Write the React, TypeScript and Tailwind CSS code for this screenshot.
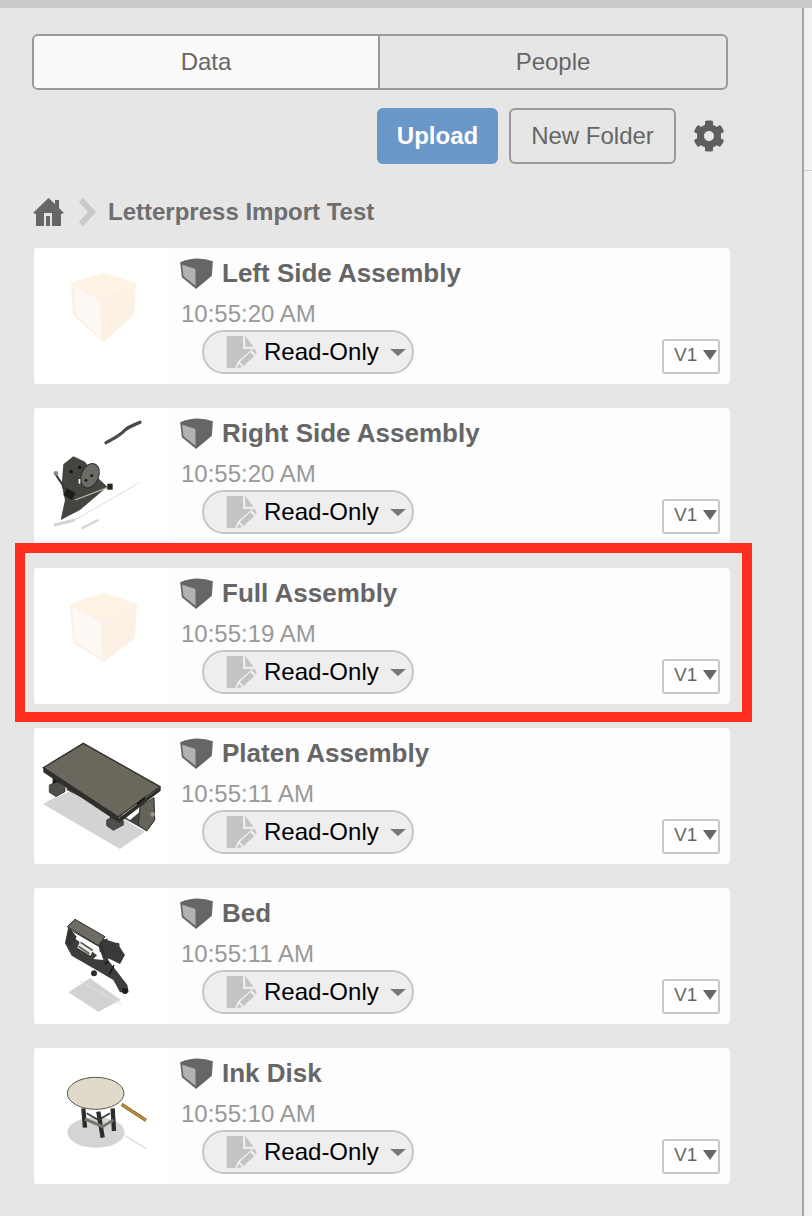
import { FaCog } from 'react-icons/fa'

const sans = "font-['Liberation_Sans',Arial,sans-serif]"

function AssemblyIcon() {
  return (
    <svg width="33" height="31" viewBox="0 0 98 93" className="shrink-0">
      <path d="M0 13 Q48 -8 98 10 L95 53 L48 93 L5 58 Z" fill="#666666" />
      <path d="M6 20 L46 33 L46 83 L10 55 Z" fill="#b2b2b2" />
    </svg>
  )
}

function ReadOnlyIcon() {
  return (
    <svg width="32" height="34" viewBox="76 20 98 102" className="shrink-0">
      <path d="M78 22 H128 V62 H156 L112 100 L104 120 H78 Z" fill="#c4c4c4" />
      <path d="M135 22 L160 55 H135 Z" fill="#c4c4c4" />
      <path d="M150 72 L162 84 L130 114 L118 102 Z" fill="#c4c4c4" />
      <path d="M155 66 L161 61 L171 71 L166 79 Z" fill="#c4c4c4" />
      <path d="M115 107 L125 117 L110 121 Z" fill="#c4c4c4" />
    </svg>
  )
}

function Caret({ className }: { className: string }) {
  return <span className={`h-0 w-0 border-x-transparent border-solid ${className}`} />
}

function EmptyCube({ tall }: { tall?: boolean }) {
  const outer = tall
    ? '70,25 103,36 101,70 70,94 39,75 36,36'
    : '69,25 102,35 100,67 69,94 39,67 37,35'
  const top = tall ? '70,25 103,36 68,52 36,36' : '69,25 102,35 68,50 37,35'
  const front = tall ? '39,39 67,54 68,90 41,73' : '40,38 66,52 67,90 42,66'
  return (
    <svg width="136" height="136" viewBox="0 0 136 136">
      <polygon points={outer} fill="#fdf0e5" />
      <polygon points={top} fill="#fff3e3" />
      <polygon points={front} fill="#fff9f5" />
    </svg>
  )
}

function RightSideThumb() {
  return (
    <svg width="136" height="136" viewBox="12 9 408 408" className="blur-[0.5px]">
      <path d="M135 345 L330 232" stroke="#dddddd" strokeWidth="3" />
      <path d="M72 360 L135 345" stroke="#d5d5d5" strokeWidth="9" />
      <path d="M155 370 L205 345" stroke="#d5d5d5" strokeWidth="7" />
      <path d="M228 113 C255 98 270 92 285 75 C300 62 315 60 330 52" stroke="#4a4a48" strokeWidth="10" fill="none" strokeLinecap="round" />
      <polygon points="92,345 105,285 95,240 100,178 130,154 165,170 200,215 232,245 150,315" fill="#45453f" />
      <ellipse cx="180" cy="212" rx="26" ry="38" transform="rotate(22 180 212)" fill="#6d6c64" stroke="#2c2c2a" strokeWidth="3" />
      <circle cx="123" cy="200" r="5" fill="#111111" />
      <circle cx="149" cy="187" r="5" fill="#111111" />
      <circle cx="185" cy="212" r="4" fill="#111111" />
      <circle cx="168" cy="226" r="4" fill="#111111" />
      <path d="M75 205 L125 280" stroke="#3a3a36" strokeWidth="6" />
      <circle cx="78" cy="205" r="7" fill="#8a8a80" />
      <rect x="104" y="255" width="30" height="24" fill="#1d1d1c" transform="rotate(30 118 266)" />
      <path d="M135 285 L240 245" stroke="#b8b8ac" strokeWidth="4" />
      <rect x="232" y="236" width="16" height="18" fill="#26261f" />
      <rect x="146" y="222" width="5" height="14" fill="#ffffff" />
    </svg>
  )
}

function PlatenThumb() {
  return (
    <svg width="136" height="136" viewBox="12 9 408 408" className="blur-[0.5px]">
      <polygon points="60,225 40,238 270,372 345,320 130,195" fill="#d3d3d3" />
      <rect x="68" y="145" width="22" height="38" fill="#161616" />
      <polygon points="58,180 82,170 105,185 105,200 78,215 58,202" fill="#4f4e48" stroke="#232321" strokeWidth="2" />
      <rect x="240" y="255" width="22" height="34" fill="#161616" />
      <polygon points="230,285 255,272 280,288 280,300 250,316 230,302" fill="#4f4e48" stroke="#232321" strokeWidth="2" />
      <polygon points="110,180 300,285 372,225 372,290 350,318 285,282 110,195" fill="#45443e" />
      <polygon points="330,245 372,218 374,285 350,318 325,300" fill="#65635a" stroke="#2d2d2a" strokeWidth="3" />
      <circle cx="368" cy="268" r="7" fill="#9a988d" />
      <polygon points="40,128 268,278 392,185 392,197 268,294 40,142" fill="#302f2c" />
      <polygon points="160,55 390,185 265,276 40,128" fill="#6b675c" stroke="#2e2e2c" strokeWidth="4" />
      <path d="M320 238 L345 218" stroke="#0f0f0f" strokeWidth="5" />
    </svg>
  )
}

function BedThumb() {
  return (
    <svg width="136" height="136" viewBox="12 9 408 408" className="blur-[0.5px]">
      <polygon points="115,322 180,280 272,345 205,380" fill="#d2d2d2" />
      <path d="M150 288 L275 358" stroke="#e2e2e2" strokeWidth="3" />
      <polygon points="105,175 132,158 200,210 232,222 292,300 296,322 270,322 250,285 190,250 125,212" fill="#3d3d3b" />
      <polygon points="115,125 140,155 125,182 105,175" fill="#343432" />
      <polygon points="205,175 232,160 235,225 212,215" fill="#343432" />
      <polygon points="215,160 262,175 285,210 270,237 225,215" fill="#3a3a38" />
      <polygon points="112,125 135,103 225,155 205,182" fill="#6e6c63" stroke="#2b2b29" strokeWidth="3" />
      <path d="M120 134 L210 186" stroke="#2a2a28" strokeWidth="3" />
      <circle cx="262" cy="180" r="7" fill="#3d3d3b" />
      <circle cx="285" cy="318" r="9" fill="#1d1d1c" />
      <circle cx="192" cy="265" r="9" fill="#2c2c2a" />
      <polygon points="150,168 190,192 182,212 142,188" fill="#e9e9e6" />
      <path d="M152 172 L188 196 M146 184 L178 206" stroke="#555550" strokeWidth="5" />
      <polygon points="190,222 212,200 220,225" fill="#ffffff" />
      <path d="M225 238 L235 228 M238 268 L252 240" stroke="#111111" strokeWidth="4" />
    </svg>
  )
}

function InkDiskThumb() {
  return (
    <svg width="136" height="136" viewBox="12 9 408 408" className="blur-[0.5px]">
      <ellipse cx="198" cy="262" rx="86" ry="46" fill="#d4d4d4" />
      <path d="M285 272 L348 310" stroke="#dddddd" strokeWidth="4" />
      <path d="M275 178 L348 226" stroke="#7a5a1e" strokeWidth="10" />
      <path d="M275 178 L348 226" stroke="#cf9a3a" strokeWidth="5" />
      <path d="M160 190 L165 248 M248 190 L252 258 M205 200 L218 278" stroke="#2d2d2b" strokeWidth="13" />
      <path d="M165 222 L218 245 L250 225" stroke="#77776f" strokeWidth="9" fill="none" />
      <path d="M170 205 L205 225 L240 205" stroke="#3a3a38" strokeWidth="5" fill="none" />
      <ellipse cx="197" cy="145" rx="85" ry="48" fill="#e0dbc9" stroke="#55554f" strokeWidth="3" />
    </svg>
  )
}

const items = [
  { name: 'Left Side Assembly', time: '10:55:20 AM', thumb: <EmptyCube /> },
  { name: 'Right Side Assembly', time: '10:55:20 AM', thumb: <RightSideThumb /> },
  { name: 'Full Assembly', time: '10:55:19 AM', thumb: <EmptyCube tall /> },
  { name: 'Platen Assembly', time: '10:55:11 AM', thumb: <PlatenThumb /> },
  { name: 'Bed', time: '10:55:11 AM', thumb: <BedThumb /> },
  { name: 'Ink Disk', time: '10:55:10 AM', thumb: <InkDiskThumb /> },
]

export default function App() {
  return (
    <div className={`relative h-[1216px] w-[812px] overflow-hidden bg-[#e6e6e6] ${sans}`}>
      <div className="h-2 bg-[#cbcbcb]" />
      <div className="flex h-[1208px]">
        <main className="w-[802px] px-8 pt-[26px]">
          <div className="flex h-14 w-[696px] overflow-hidden rounded-md border-2 border-[#999999] text-2xl text-[#666666]">
            <div className="flex w-[344px] items-center justify-center bg-[#fafafa]">Data</div>
            <div className="flex flex-1 items-center justify-center border-l-2 border-[#999999]">People</div>
          </div>

          <div className="mt-[18px] flex h-14 w-[696px] items-center justify-end pr-[3px]">
            <button className="flex h-14 w-[121px] items-center justify-center rounded-md bg-[#6a96c8] text-2xl font-bold text-white">
              Upload
            </button>
            <button className="ml-[11px] flex h-14 w-[167px] items-center justify-center rounded-md border-2 border-[#999999] text-2xl text-[#666666]">
              New Folder
            </button>
            <FaCog className="ml-[17px] text-[#5f5f5f]" size={32} />
          </div>

          <nav className="mt-7 flex h-10 items-center pl-px">
            <svg width="31" height="28" viewBox="0 0 31 28" className="shrink-0">
              <path d="M15.5 0 L22 6 V2 H26 V10 L31 15 L28 16 V28 H3 V16 L0 15 Z" fill="#666666" />
              <path d="M11 15 H19 V28 H17 V18 H13 V28 H11 Z" fill="#e6e6e6" />
            </svg>
            <svg width="20" height="28" viewBox="0 0 20 28" className="ml-[13px] shrink-0">
              <path d="M4 2 L15 14 L4 26" fill="none" stroke="#c9c9c9" strokeWidth="6" />
            </svg>
            <span className="ml-[11px] text-2xl font-bold text-[#6e6e6e]">Letterpress Import Test</span>
          </nav>

          <ul className="mt-4 ml-0.5 flex w-[696px] flex-col gap-6">
            {items.map((item) => (
              <li key={item.name} className="flex h-[136px] overflow-hidden rounded-sm bg-[#fdfdfd]">
                <div className="w-[136px] shrink-0 bg-white">{item.thumb}</div>
                <div className="flex flex-1 justify-between pr-2.5 pb-2.5 pl-2.5">
                  <div>
                    <div className="flex h-[50px] items-center gap-[9px]">
                      <AssemblyIcon />
                      <span className="text-[26px] font-bold text-[#666666]">{item.name}</span>
                    </div>
                    <div className="flex h-[30px] items-center pt-0.5 pl-px text-2xl text-[#999999]">{item.time}</div>
                    <div className="mt-0.5 ml-[22px] flex h-11 w-[212px] items-center rounded-full border-2 border-[#c6c6c6] bg-[#eeeeee] pl-[22px]">
                      <ReadOnlyIcon />
                      <span className="ml-1.5 text-2xl text-black">Read-Only</span>
                      <Caret className="ml-[11px] border-x-[8px] border-t-[7px] border-t-[#777777]" />
                    </div>
                  </div>
                  <div className="mt-auto flex h-[35px] w-[58px] items-center gap-1.5 rounded-[3px] border-2 border-[#c8c8c8] bg-white pb-[3px] pl-2.5 text-[19px] text-[#666666]">
                    V1
                    <Caret className="border-x-[7px] border-t-[10px] border-t-[#666666]" />
                  </div>
                </div>
              </li>
            ))}
          </ul>
        </main>
        <div className="w-0.5 bg-[#a6a6a6]" />
        <aside className="flex-1 bg-[#f2f2f2]">
          <div className="h-[163px] border-b border-[#d0d0d0]" />
        </aside>
      </div>
      {/* red highlight drawn over the third row */}
      <div className="pointer-events-none absolute top-[543px] left-[15px] h-[179px] w-[737px] border-[10px] border-[#ff2d20]" />
    </div>
  )
}
